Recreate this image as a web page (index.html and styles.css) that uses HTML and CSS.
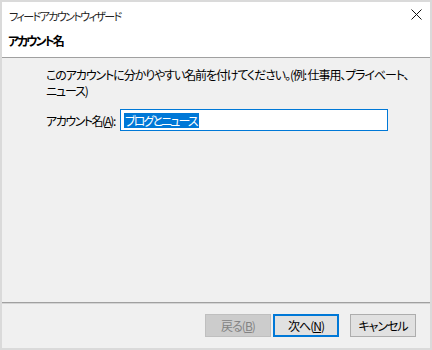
FILE: index.html
```html
<!DOCTYPE html>
<html lang="ja">
<head>
    <meta charset="utf-8">
    <title>フィードアカウントウィザード</title>
    <link rel="stylesheet" href="styles.css">
</head>
<body>
    <div class="window">
        <div class="top">
            <div class="titlebar">
                <span class="title">フィードアカウントウィザード</span>
                <svg class="close" width="11" height="11" viewBox="0 0 11 11">
                    <path d="M0.5 0.5 L10.5 10.5 M10.5 0.5 L0.5 10.5" stroke="#111" stroke-width="1" fill="none"/>
                </svg>
            </div>
            <h1 class="heading">アカウント名</h1>
        </div>

        <div class="content">
            <p class="desc">このアカウントに分かりやすい名前を付けてください。(例:&nbsp;仕事用、プライベート、<br>ニュース)</p>
            <div class="field">
                <label for="accountName">アカウント名(<u>A</u>):</label>
                <div class="input"><span class="sel">ブログとニュース</span></div>
            </div>
        </div>

        <div class="footer">
            <button class="btn disabled">戻る(<u>B</u>)</button>
            <button class="btn default">次へ(<u>N</u>)</button>
            <button class="btn cancel">キャンセル</button>
        </div>
    </div>
</body>
</html>
```

FILE: styles.css
```css
html, body { margin: 0; padding: 0; }
body {
    background: #dadada;
    font-family: "Noto Sans CJK JP", "Noto Sans", sans-serif;
    font-size: 12px;
    font-feature-settings: "palt";
    color: #000;
}
.window {
    margin: 2px;
    width: 428px;
    height: 346px;
    background: #f0f0f0;
    display: flex;
    flex-direction: column;
}
.top {
    background: #fff;
    height: 55px;
    border-bottom: 1px solid #a0a0a0;
}
.titlebar {
    height: 27px;
    display: flex;
    align-items: center;
    justify-content: space-between;
    padding: 0 8px 0 7px;
}
.title { color: #222; font-size: 11px; letter-spacing: -1.6px; }
.close { margin-top: -3px; }
.heading {
    margin: 0;
    padding-left: 6px;
    font-size: 12px;
    font-weight: bold;
    line-height: 24px;
    letter-spacing: -2px;
}
.content {
    flex: 1;
    padding: 9px 0 0 44px;
}
.desc {
    margin: 0;
    line-height: 16px;
    white-space: nowrap;
    letter-spacing: -1.1px;
}
.field {
    display: flex;
    align-items: center;
    margin-top: 10px;
}
.field label {
    width: 74px;
    flex-shrink: 0;
    white-space: nowrap;
    letter-spacing: -1.5px;
}
.input {
    width: 263px;
    height: 20px;
    border: 1px solid #0078d7;
    background: #fff;
    display: flex;
    align-items: center;
    padding-left: 3px;
}
.sel {
    background: #0078d7;
    color: #fff;
    line-height: 15px;
    letter-spacing: -1.9px;
    padding: 0 2px 0 1px;
}
.footer {
    height: 45px;
    border-top: 1px solid #a0a0a0;
    box-shadow: inset 0 1px 0 #d4d4d4;
    display: flex;
    align-items: center;
    justify-content: flex-end;
    padding-right: 14px;
}
.btn {
    font: inherit;
    font-feature-settings: "palt";
    width: 66px;
    height: 23px;
    padding: 0;
    background: #e1e1e1;
    border: 1px solid #adadad;
    color: #000;
    letter-spacing: -1px;
}
.btn u { text-decoration: underline; }
.disabled {
    background: #cccccc;
    border-color: #bfbfbf;
    color: #838383;
}
.default {
    margin-left: 2px;
    border: 2px solid #0078d7;
}
.cancel { margin-left: 11px; }
```
